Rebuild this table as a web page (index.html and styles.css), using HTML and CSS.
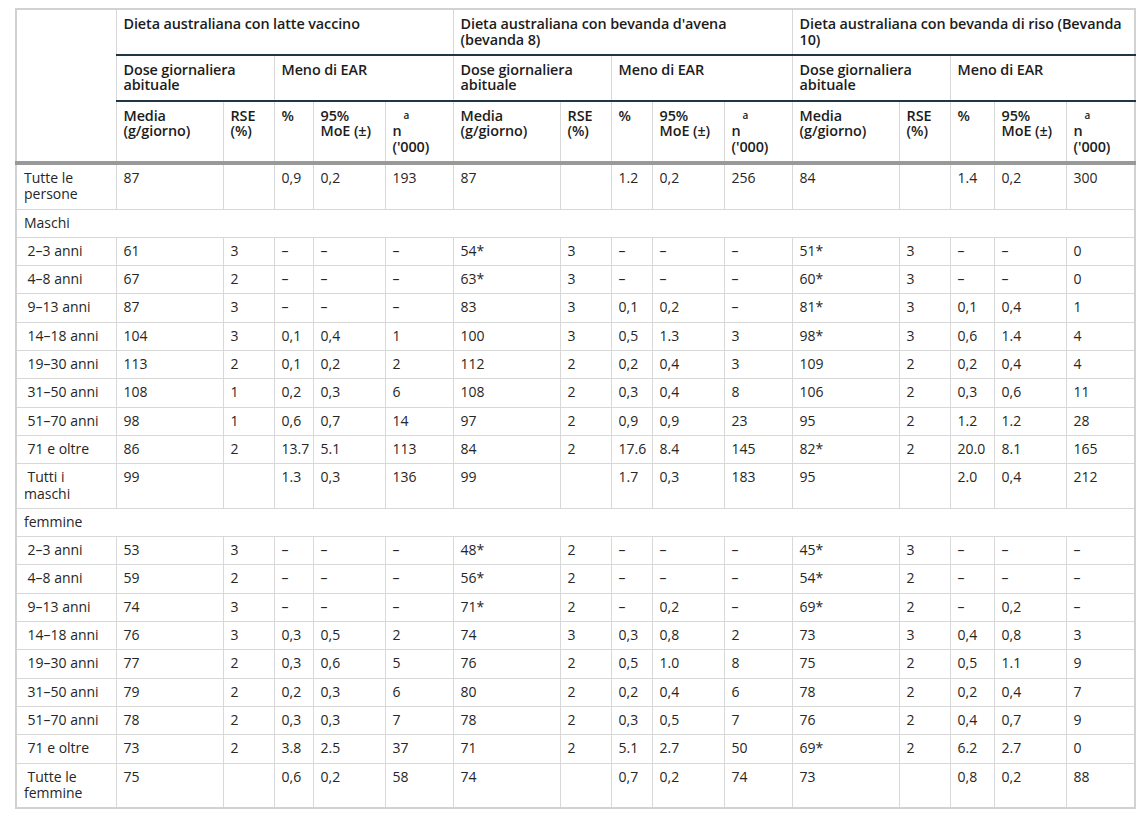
FILE: index.html
```html
<!DOCTYPE html>
<html lang="it">
<head>
<meta charset="utf-8">
<title>Dieta australiana</title>
<link rel="stylesheet" href="styles.css">
</head>
<body>
<table class="tbl">
  <colgroup>
    <col class="c0">
    <col class="cm"><col class="cr"><col class="cp"><col class="ce"><col class="cn">
    <col class="cm"><col class="cr"><col class="cp2"><col class="ce"><col class="cn">
    <col class="cm"><col class="cr"><col class="cp3"><col class="ce"><col class="cn2">
  </colgroup>
  <thead>
    <tr class="h1">
      <th class="corner" rowspan="3"></th>
      <th colspan="5">Dieta australiana con latte vaccino</th>
      <th colspan="5">Dieta australiana con bevanda d'avena (bevanda 8)</th>
      <th colspan="5">Dieta australiana con bevanda di riso (Bevanda 10)</th>
    </tr>
    <tr class="h2">
      <th colspan="2">Dose giornaliera abituale</th>
      <th colspan="3">Meno di EAR</th>
      <th colspan="2">Dose giornaliera abituale</th>
      <th colspan="3">Meno di EAR</th>
      <th colspan="2">Dose giornaliera abituale</th>
      <th colspan="3">Meno di EAR</th>
    </tr>
    <tr class="h3">
      <th>Media (g/giorno)</th><th>RSE (%)</th><th>%</th><th>95% MoE (±)</th><th><span class="sup">a</span><span class="nl">n ('000)</span></th>
      <th>Media (g/giorno)</th><th>RSE (%)</th><th>%</th><th>95% MoE (±)</th><th><span class="sup">a</span><span class="nl">n ('000)</span></th>
      <th>Media (g/giorno)</th><th>RSE (%)</th><th>%</th><th>95% MoE (±)</th><th><span class="sup">a</span><span class="nl">n ('000)</span></th>
    </tr>
  </thead>
  <tbody>
    <tr><td>Tutte le persone</td><td>87</td><td></td><td>0,9</td><td>0,2</td><td>193</td><td>87</td><td></td><td>1.2</td><td>0,2</td><td>256</td><td>84</td><td></td><td>1.4</td><td>0,2</td><td>300</td></tr>
    <tr><td colspan="16">Maschi</td></tr>
    <tr><td class="ind">2–3 anni</td><td>61</td><td>3</td><td>–</td><td>–</td><td>–</td><td>54*</td><td>3</td><td>–</td><td>–</td><td>–</td><td>51*</td><td>3</td><td>–</td><td>–</td><td>0</td></tr>
    <tr><td class="ind">4–8 anni</td><td>67</td><td>2</td><td>–</td><td>–</td><td>–</td><td>63*</td><td>3</td><td>–</td><td>–</td><td>–</td><td>60*</td><td>3</td><td>–</td><td>–</td><td>0</td></tr>
    <tr><td class="ind">9–13 anni</td><td>87</td><td>3</td><td>–</td><td>–</td><td>–</td><td>83</td><td>3</td><td>0,1</td><td>0,2</td><td>–</td><td>81*</td><td>3</td><td>0,1</td><td>0,4</td><td>1</td></tr>
    <tr><td class="ind">14–18 anni</td><td>104</td><td>3</td><td>0,1</td><td>0,4</td><td>1</td><td>100</td><td>3</td><td>0,5</td><td>1.3</td><td>3</td><td>98*</td><td>3</td><td>0,6</td><td>1.4</td><td>4</td></tr>
    <tr><td class="ind">19–30 anni</td><td>113</td><td>2</td><td>0,1</td><td>0,2</td><td>2</td><td>112</td><td>2</td><td>0,2</td><td>0,4</td><td>3</td><td>109</td><td>2</td><td>0,2</td><td>0,4</td><td>4</td></tr>
    <tr><td class="ind">31–50 anni</td><td>108</td><td>1</td><td>0,2</td><td>0,3</td><td>6</td><td>108</td><td>2</td><td>0,3</td><td>0,4</td><td>8</td><td>106</td><td>2</td><td>0,3</td><td>0,6</td><td>11</td></tr>
    <tr><td class="ind">51–70 anni</td><td>98</td><td>1</td><td>0,6</td><td>0,7</td><td>14</td><td>97</td><td>2</td><td>0,9</td><td>0,9</td><td>23</td><td>95</td><td>2</td><td>1.2</td><td>1.2</td><td>28</td></tr>
    <tr><td class="ind">71 e oltre</td><td>86</td><td>2</td><td>13.7</td><td>5.1</td><td>113</td><td>84</td><td>2</td><td>17.6</td><td>8.4</td><td>145</td><td>82*</td><td>2</td><td>20.0</td><td>8.1</td><td>165</td></tr>
    <tr><td class="ind">Tutti i maschi</td><td>99</td><td></td><td>1.3</td><td>0,3</td><td>136</td><td>99</td><td></td><td>1.7</td><td>0,3</td><td>183</td><td>95</td><td></td><td>2.0</td><td>0,4</td><td>212</td></tr>
    <tr><td colspan="16">femmine</td></tr>
    <tr><td class="ind">2–3 anni</td><td>53</td><td>3</td><td>–</td><td>–</td><td>–</td><td>48*</td><td>2</td><td>–</td><td>–</td><td>–</td><td>45*</td><td>3</td><td>–</td><td>–</td><td>–</td></tr>
    <tr><td class="ind">4–8 anni</td><td>59</td><td>2</td><td>–</td><td>–</td><td>–</td><td>56*</td><td>2</td><td>–</td><td>–</td><td>–</td><td>54*</td><td>2</td><td>–</td><td>–</td><td>–</td></tr>
    <tr><td class="ind">9–13 anni</td><td>74</td><td>3</td><td>–</td><td>–</td><td>–</td><td>71*</td><td>2</td><td>–</td><td>0,2</td><td>–</td><td>69*</td><td>2</td><td>–</td><td>0,2</td><td>–</td></tr>
    <tr><td class="ind">14–18 anni</td><td>76</td><td>3</td><td>0,3</td><td>0,5</td><td>2</td><td>74</td><td>3</td><td>0,3</td><td>0,8</td><td>2</td><td>73</td><td>3</td><td>0,4</td><td>0,8</td><td>3</td></tr>
    <tr><td class="ind">19–30 anni</td><td>77</td><td>2</td><td>0,3</td><td>0,6</td><td>5</td><td>76</td><td>2</td><td>0,5</td><td>1.0</td><td>8</td><td>75</td><td>2</td><td>0,5</td><td>1.1</td><td>9</td></tr>
    <tr><td class="ind">31–50 anni</td><td>79</td><td>2</td><td>0,2</td><td>0,3</td><td>6</td><td>80</td><td>2</td><td>0,2</td><td>0,4</td><td>6</td><td>78</td><td>2</td><td>0,2</td><td>0,4</td><td>7</td></tr>
    <tr><td class="ind">51–70 anni</td><td>78</td><td>2</td><td>0,3</td><td>0,3</td><td>7</td><td>78</td><td>2</td><td>0,3</td><td>0,5</td><td>7</td><td>76</td><td>2</td><td>0,4</td><td>0,7</td><td>9</td></tr>
    <tr><td class="ind">71 e oltre</td><td>73</td><td>2</td><td>3.8</td><td>2.5</td><td>37</td><td>71</td><td>2</td><td>5.1</td><td>2.7</td><td>50</td><td>69*</td><td>2</td><td>6.2</td><td>2.7</td><td>0</td></tr>
    <tr><td class="ind">Tutte le femmine</td><td>75</td><td></td><td>0,6</td><td>0,2</td><td>58</td><td>74</td><td></td><td>0,7</td><td>0,2</td><td>74</td><td>73</td><td></td><td>0,8</td><td>0,2</td><td>88</td></tr>
  </tbody>
</table>
</body>
</html>
```

FILE: styles.css
```css
html, body {
  background: #ffffff;
}
body {
  margin: 8px 0 0 15px;
  font-family: "Open Sans", "Liberation Sans", sans-serif;
  color: #262626;
}
.tbl {
  border-collapse: collapse;
  table-layout: fixed;
  width: 1121px;
  border: 2px solid #d2d2d2;
}
.c0 { width: 100px; }
.cm { width: 107px; }
.cr { width: 51px; }
.cp { width: 39px; }
.cp2 { width: 41px; }
.cp3 { width: 44px; }
.ce { width: 72px; }
.cn { width: 68px; }
.cn2 { width: 69px; }

th, td {
  border: 1px solid #d8d8d8;
  text-align: left;
  vertical-align: top;
}
th {
  font-size: 14.4px;
  font-weight: 600;
  line-height: 15.8px;
  letter-spacing: -0.1px;
  color: #1c1c1c;
  padding: 6px 3px 6px 7px;
}
.h1 th, .h2 th {
  border-bottom: 2px solid #1e3646;
}
.h1 th.corner {
  border-bottom: 4px solid #999999;
}
.h1 { height: 45px; }
.h2 { height: 46px; }
.h3 th {
  border-bottom: 4px solid #999999;
  height: 44px;
}
.sup {
  display: block;
  font-size: 10px;
  line-height: 15.8px;
  padding-left: 11px;
}
.nl {
  display: block;
  width: 20px;
}
td {
  font-size: 14px;
  line-height: 16.3px;
  padding: 5px 6px 6px 7px;
}
td.ind {
  text-indent: 3.5px;
}
```
